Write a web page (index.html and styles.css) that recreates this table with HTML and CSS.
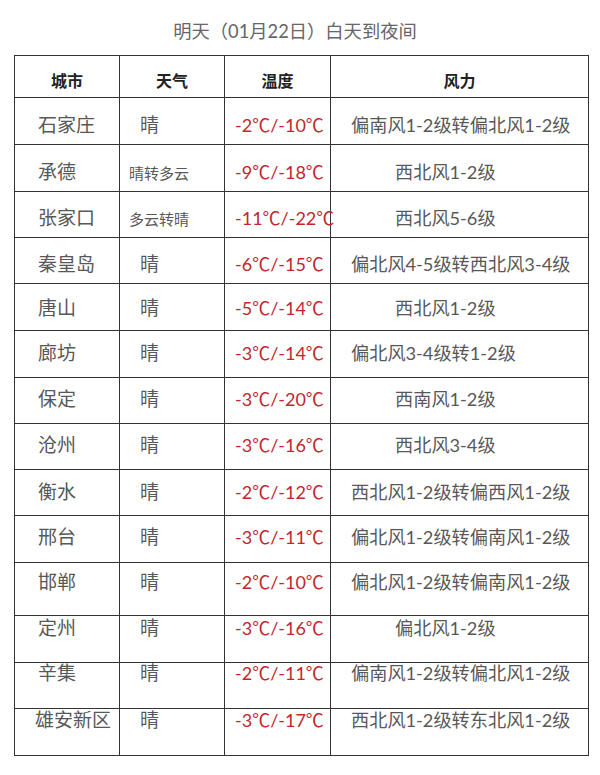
FILE: index.html
```html
<!DOCTYPE html>
<html lang="zh-CN">
<head>
<meta charset="utf-8">
<title>明天（01月22日）白天到夜间</title>
<link rel="stylesheet" href="styles.css">
</head>
<body>
<div class="title">明天（01月22日）白天到夜间</div>
<table class="forecast">
  <colgroup>
    <col class="c-city"><col class="c-wx"><col class="c-temp"><col class="c-wind">
  </colgroup>
  <thead>
    <tr><th>城市</th><th>天气</th><th>温度</th><th>风力</th></tr>
  </thead>
  <tbody>
    <tr class="h47 o28"><td class="city">石家庄</td><td class="wx"><span class="one">晴</span></td><td class="temp">-2℃/-10℃</td><td class="wind">偏南风1-2级转偏北风1-2级</td></tr>
    <tr class="h47 o28"><td class="city">承德</td><td class="wx"><span class="small">晴转多云</span></td><td class="temp">-9℃/-18℃</td><td class="wind short">西北风1-2级</td></tr>
    <tr class="h46 o27"><td class="city">张家口</td><td class="wx"><span class="small">多云转晴</span></td><td class="temp">-11℃/-22℃</td><td class="wind short">西北风5-6级</td></tr>
    <tr class="h46 o27"><td class="city">秦皇岛</td><td class="wx"><span class="one">晴</span></td><td class="temp">-6℃/-15℃</td><td class="wind">偏北风4-5级转西北风3-4级</td></tr>
    <tr class="h47 o25"><td class="city">唐山</td><td class="wx"><span class="one">晴</span></td><td class="temp">-5℃/-14℃</td><td class="wind short">西北风1-2级</td></tr>
    <tr class="h47 o23"><td class="city">廊坊</td><td class="wx"><span class="one">晴</span></td><td class="temp">-3℃/-14℃</td><td class="wind">偏北风3-4级转1-2级</td></tr>
    <tr class="h46 o22"><td class="city">保定</td><td class="wx"><span class="one">晴</span></td><td class="temp">-3℃/-20℃</td><td class="wind short">西南风1-2级</td></tr>
    <tr class="h46 o22"><td class="city">沧州</td><td class="wx"><span class="one">晴</span></td><td class="temp">-3℃/-16℃</td><td class="wind short">西北风3-4级</td></tr>
    <tr class="h46 o23"><td class="city">衡水</td><td class="wx"><span class="one">晴</span></td><td class="temp">-2℃/-12℃</td><td class="wind">西北风1-2级转偏西风1-2级</td></tr>
    <tr class="h47 o22"><td class="city">邢台</td><td class="wx"><span class="one">晴</span></td><td class="temp">-3℃/-11℃</td><td class="wind">偏北风1-2级转偏南风1-2级</td></tr>
    <tr class="h53 o20"><td class="city">邯郸</td><td class="wx"><span class="one">晴</span></td><td class="temp">-2℃/-10℃</td><td class="wind">偏北风1-2级转偏南风1-2级</td></tr>
    <tr class="h47 o13"><td class="city">定州</td><td class="wx"><span class="one">晴</span></td><td class="temp">-3℃/-16℃</td><td class="wind short">偏北风1-2级</td></tr>
    <tr class="h46 o11"><td class="city">辛集</td><td class="wx"><span class="one">晴</span></td><td class="temp">-2℃/-11℃</td><td class="wind">偏南风1-2级转偏北风1-2级</td></tr>
    <tr class="h47 o12"><td class="city wide">雄安新区</td><td class="wx"><span class="one">晴</span></td><td class="temp">-3℃/-17℃</td><td class="wind">西北风1-2级转东北风1-2级</td></tr>
  </tbody>
</table>
</body>
</html>
```

FILE: styles.css
```css
html, body {
  margin: 0;
  padding: 0;
  background: #ffffff;
}

body {
  width: 600px;
  height: 775px;
  overflow: hidden;
  font-family: Lato, "Noto Sans CJK SC", "Noto Sans", sans-serif;
  color: #585858;
}

.title {
  box-sizing: border-box;
  width: 600px;
  padding: 21px 10px 0 0;
  height: 55px;
  line-height: 20px;
  font-size: 18.3px;
  text-align: center;
  color: #666666;
}

.forecast {
  margin-left: 14px;
  width: 574px;
  table-layout: fixed;
  border-collapse: collapse;
}

.c-city { width: 105px; }
.c-wx { width: 105px; }
.c-temp { width: 106px; }
.c-wind { width: 258px; }

.forecast th,
.forecast td {
  border: 1px solid #333333;
  padding: 0;
  vertical-align: top;
  white-space: nowrap;
  overflow: visible;
}

.forecast thead tr {
  height: 42px;
}

.forecast th {
  padding-top: 15px;
  font-family: "Noto Sans CJK SC", sans-serif;
  font-weight: 700;
  font-size: 16px;
  line-height: 18px;
  color: #222222;
  text-align: center;
}

.forecast td {
  font-size: 19px;
  line-height: 20px;
  text-align: left;
}

.h46 { height: 46px; }
.h47 { height: 47px; }
.h53 { height: 53px; }

.forecast .o28 td { padding-top: 17px; }
.forecast .o27 td { padding-top: 16px; }
.forecast .o25 td { padding-top: 14px; }
.forecast .o23 td { padding-top: 12px; }
.forecast .o22 td { padding-top: 11px; }
.forecast .o20 td { padding-top: 9px; }
.forecast .o13 td { padding-top: 2px; }
.forecast .o12 td { padding-top: 1px; }
.forecast .o11 td { padding-top: 0px; }

.forecast td.city {
  padding-left: 23px;
  color: #585858;
}

.forecast td.city.wide {
  padding-left: 20px;
}

.forecast td.wx {
  padding-left: 9px;
}

.wx .one {
  padding-left: 11px;
}

.wx .small {
  font-size: 15px;
}

.forecast td.temp {
  padding-left: 10px;
  font-size: 18px;
  color: #c1272d;
}

.forecast td.wind {
  padding-left: 20px;
  font-size: 18.2px;
  color: #585858;
}

.forecast td.wind.short {
  padding-left: 64px;
}
```
